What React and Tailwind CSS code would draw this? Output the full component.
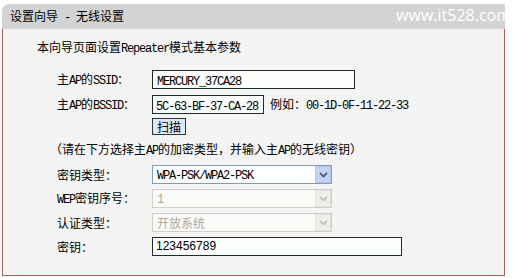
import React from "react";

const M = ({ children }) => (
  <span className="font-['Liberation_Mono',monospace] text-[12px] tracking-[-1.2px]">{children}</span>
);

function Chevron({ color }) {
  return (
    <svg width="9" height="6" viewBox="0 0 9 6">
      <path d="M1 1 L4.5 4.5 L8 1" fill="none" stroke={color} strokeWidth="1.8" />
    </svg>
  );
}

function Select({ value, disabled }) {
  return (
    <div
      className={
        "w-[180px] h-[19px] flex items-center border " +
        (disabled ? "border-[#d2d0c6] bg-[#fbfbf9] text-[#aca899]" : "border-[#7f9db9] bg-white text-black")
      }
    >
      <div className="flex-1 pl-[4px] leading-[17px]">{value}</div>
      <div
        className={
          "w-[16px] h-[17px] flex items-center justify-center border " +
          (disabled ? "bg-[#efeee8] border-[#e2e1d9]" : "bg-[#c2d3f6] border-[#b4c6ec]")
        }
      >
        <Chevron color={disabled ? "#c8c6ba" : "#4a5f8a"} />
      </div>
    </div>
  );
}

function Row({ label, children, className = "" }) {
  return (
    <div className={"flex items-center pl-[54px] " + className}>
      <div className="w-[95px]">{label}</div>
      {children}
    </div>
  );
}

export default function App() {
  return (
    <div className="w-[514px] h-[278px] bg-white pt-[4px] pl-[2px] font-['Noto_Sans_CJK_SC',sans-serif] text-[12px] leading-[16px] text-black">
      <div className="w-[503px]">
        {/* header bar */}
        <div className="h-[25px] bg-[#d3d3d3] rounded-tl-[7px] flex items-center justify-between pl-[8px] overflow-hidden">
          <span>
            设置向导<M>{"\u00a0-\u00a0"}</M>无线设置
          </span>
          <span className="font-['Open_Sans',sans-serif] text-[16px] text-white -mr-[6px] -mt-[3px]">www.it528.com</span>
        </div>

        {/* form body */}
        <div className="h-[247px] bg-[#f4f4f4] border-x border-b border-[#a85c5c] pt-[10px]">
          <p className="pl-[34px]">
            本向导页面设置<M>Repeater</M>模式基本参数
          </p>

          <Row className="mt-[13px]" label={<>主<M>AP</M>的<M>SSID</M>：</>}>
            <div className="w-[203px] h-[19px] border border-[#1d2b2b] bg-[#fcfdfd] pl-[4px] leading-[17px]">
              <M>MERCURY_37CA28</M>
            </div>
          </Row>

          <Row className="mt-[6px]" label={<>主<M>AP</M>的<M>BSSID</M>：</>}>
            <div className="w-[112px] h-[19px] border border-[#1d2b2b] bg-[#fcfdfd] pl-[3px] leading-[17px]">
              <M>5C-63-BF-37-CA-28</M>
            </div>
            <span className="ml-[6px]">
              例如：<M>00-1D-0F-11-22-33</M>
            </span>
          </Row>

          <div className="mt-[4px] pl-[149px]">
            <button className="w-[34px] h-[17px] border border-[#2a3838] bg-[#dce9f6] leading-[15px] text-[12px]">扫描</button>
          </div>

          <p className="mt-[6px] pl-[47px]">
            （请在下方选择主<M>AP</M>的加密类型，并输入主<M>AP</M>的无线密钥）
          </p>

          <Row className="mt-[6px]" label="密钥类型：">
            <Select value={<M>WPA-PSK/WPA2-PSK</M>} />
          </Row>

          <Row className="mt-[5px]" label={<><M>WEP</M>密钥序号：</>}>
            <Select value={<M>1</M>} disabled />
          </Row>

          <Row className="mt-[5px]" label="认证类型：">
            <Select value="开放系统" disabled />
          </Row>

          <Row className="mt-[5px]" label="密钥：">
            <div className="w-[250px] h-[19px] border border-[#1d2b2b] bg-[#fcfdfd] pl-[3px] leading-[17px] font-['Liberation_Sans',sans-serif]">
              123456789
            </div>
          </Row>
        </div>
      </div>
    </div>
  );
}
